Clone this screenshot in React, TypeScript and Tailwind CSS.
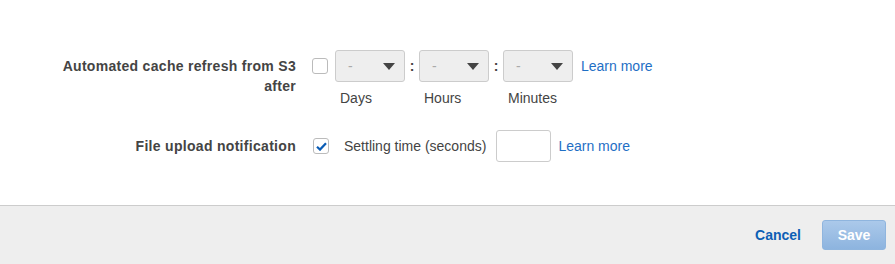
const font = { fontFamily: '"Liberation Sans", Arial, sans-serif' };

function Caret() {
  return (
    <svg width="12" height="7" viewBox="0 0 12 7" className="shrink-0">
      <path d="M0 0 H12 L6 7 Z" fill="#444" />
    </svg>
  );
}

function TimeSelect({ label }: { label: string }) {
  return (
    <div className="flex flex-col">
      <div className="flex h-[32px] w-[70px] items-center justify-between rounded-[3px] border border-[#ccc] bg-[#eee] pl-[12px] pr-[9px]">
        <span className="text-[14px] text-[#aaa]">-</span>
        <Caret />
      </div>
      <div className="mt-[6px] pl-[5px] text-[14px] leading-[20px] text-[#444]">{label}</div>
    </div>
  );
}

function Colon() {
  return <div className="flex h-[32px] w-[14px] items-center justify-center text-[14px] font-bold text-[#444]">:</div>;
}

export default function App() {
  return (
    <div style={font} className="flex h-[264px] w-[895px] flex-col bg-white">
      <div className="flex-1 pt-[50px]">
        <div className="flex items-start">
          <div className="w-[296px] pt-[6px] text-right text-[14px] font-bold leading-[20px] tracking-[0.3px] text-[#444]">
            Automated cache refresh from S3
            <br />
            after
          </div>
          <div className="flex items-start pl-[16px]">
            <div className="mt-[8px] h-[16px] w-[16px] rounded-[3px] border border-[#bbb] bg-white" />
            <div className="ml-[7px] flex items-start">
              <TimeSelect label="Days" />
              <Colon />
              <TimeSelect label="Hours" />
              <Colon />
              <TimeSelect label="Minutes" />
            </div>
            <a className="ml-[8px] flex h-[32px] items-center text-[14px] text-[#1f6fc5]">Learn more</a>
          </div>
        </div>

        <div className="mt-[22px] flex items-center">
          <div className="w-[296px] text-right text-[14px] font-bold leading-[20px] tracking-[0.3px] text-[#444]">
            File upload notification
          </div>
          <div className="flex items-center pl-[17px]">
            <div className="flex h-[16px] w-[16px] items-center justify-center rounded-[3px] border border-[#bbb] bg-white">
              <svg width="11" height="9" viewBox="0 0 11 9">
                <path d="M1 4.8 L4 7.6 L10 1.2" fill="none" stroke="#0a5cb5" strokeWidth="2.2" />
              </svg>
            </div>
            <span className="ml-[15px] text-[14px] text-[#444]">Settling time (seconds)</span>
            <div className="ml-[10px] h-[32px] w-[55px] rounded-[3px] border border-[#ccc] bg-white" />
            <a className="ml-[7px] text-[14px] text-[#1f6fc5]">Learn more</a>
          </div>
        </div>
      </div>

      <div className="flex h-[59px] items-center justify-end border-t border-[#ccc] bg-[#eee] pr-[9px]">
        <a className="text-[14px] font-bold text-[#0d5fb5]">Cancel</a>
        <button className="ml-[21px] h-[30px] w-[64px] rounded-[3px] border border-[#8fb5de] bg-gradient-to-b from-[#abc9ea] to-[#8db4df] text-[14px] font-bold text-white">
          Save
        </button>
      </div>
    </div>
  );
}
